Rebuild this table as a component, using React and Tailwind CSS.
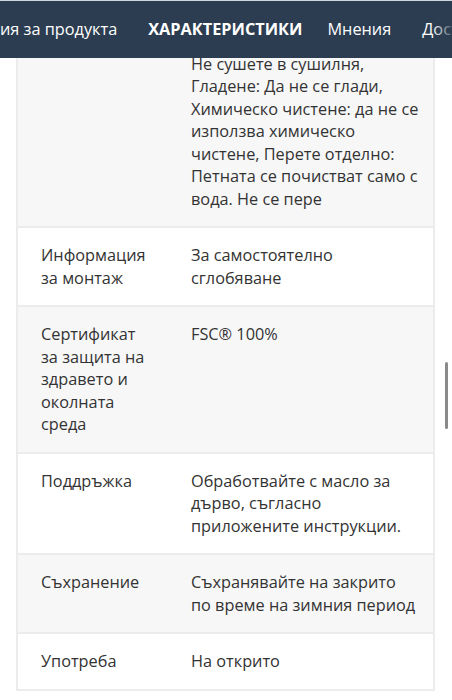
import React from 'react'

// lines are split the way the product page wraps them
const rows = [
  {
    label: [],
    value: [
      'Не сушете в сушилня,',
      'Гладене: Да не се глади,',
      'Химическо чистене: да не се',
      'използва химическо',
      'чистене, Перете отделно:',
      'Петната се почистват само с',
      'вода. Не се пере',
    ],
    gray: true,
    cut: true,
  },
  { label: ['Информация', 'за монтаж'], value: ['За самостоятелно', 'сглобяване'], gray: false },
  { label: ['Сертификат', 'за защита на', 'здравето и', 'околната', 'среда'], value: ['FSC® 100%'], gray: true },
  { label: ['Поддръжка'], value: ['Обработвайте с масло за', 'дърво, съгласно', 'приложените инструкции.'], gray: false },
  { label: ['Съхранение'], value: ['Съхранявайте на закрито', 'по време на зимния период'], gray: true },
  { label: ['Употреба'], value: ['На открито'], gray: false },
]

const Lines = ({ lines }) => lines.map((l, i) => (
  <div key={i} className="whitespace-nowrap">{l}</div>
))

const Row = ({ label, value, gray, cut }) => {
  return (
    <div className={`flex flex-row border-b-2 border-[#ececec] overflow-hidden ${gray ? 'bg-[#f7f7f7]' : 'bg-white'} ${cut ? 'pb-4' : 'py-4'}`}>
      <div className={`flex flex-row w-full ${cut ? '-mt-[5.5px]' : ''}`}>
        <div className="w-[173px] shrink-0 pl-[23px]">
          <Lines lines={label} />
        </div>
        <div className="flex-1">
          <Lines lines={value} />
        </div>
      </div>
    </div>
  )
}

const App = () => {
  return (
    <div className="relative w-[452px] h-[700px] overflow-hidden bg-white font-['Open_Sans',sans-serif] text-[16.3px] leading-[22.5px] text-[#333]">
      <div className="relative h-[58px] border-t border-[#cfd5dc] bg-[#2c3d51] flex flex-row items-center whitespace-nowrap overflow-hidden text-white text-[16.3px]">
        <div className="ml-[0px]">ия за продукта</div>
        <div className="ml-[31px] font-bold">ХАРАКТЕРИСТИКИ</div>
        <div className="ml-[25px]">Мнения</div>
        <div className="ml-[31px]">Доставка</div>
        <div className="absolute right-0 top-0 h-full w-[20px] bg-gradient-to-r from-[#2c3d51]/0 to-[#2c3d51]/80"></div>
      </div>

      <div className="ml-[16px] w-[419px] border-x-2 border-[#ececec]">
        {rows.map((r, i) => (
          <Row key={i} {...r} />
        ))}
      </div>

      <div className="absolute right-[4px] top-[362px] w-[3px] h-[67px] rounded-full bg-[#8a8a8a]"></div>
    </div>
  )
}

export default App
